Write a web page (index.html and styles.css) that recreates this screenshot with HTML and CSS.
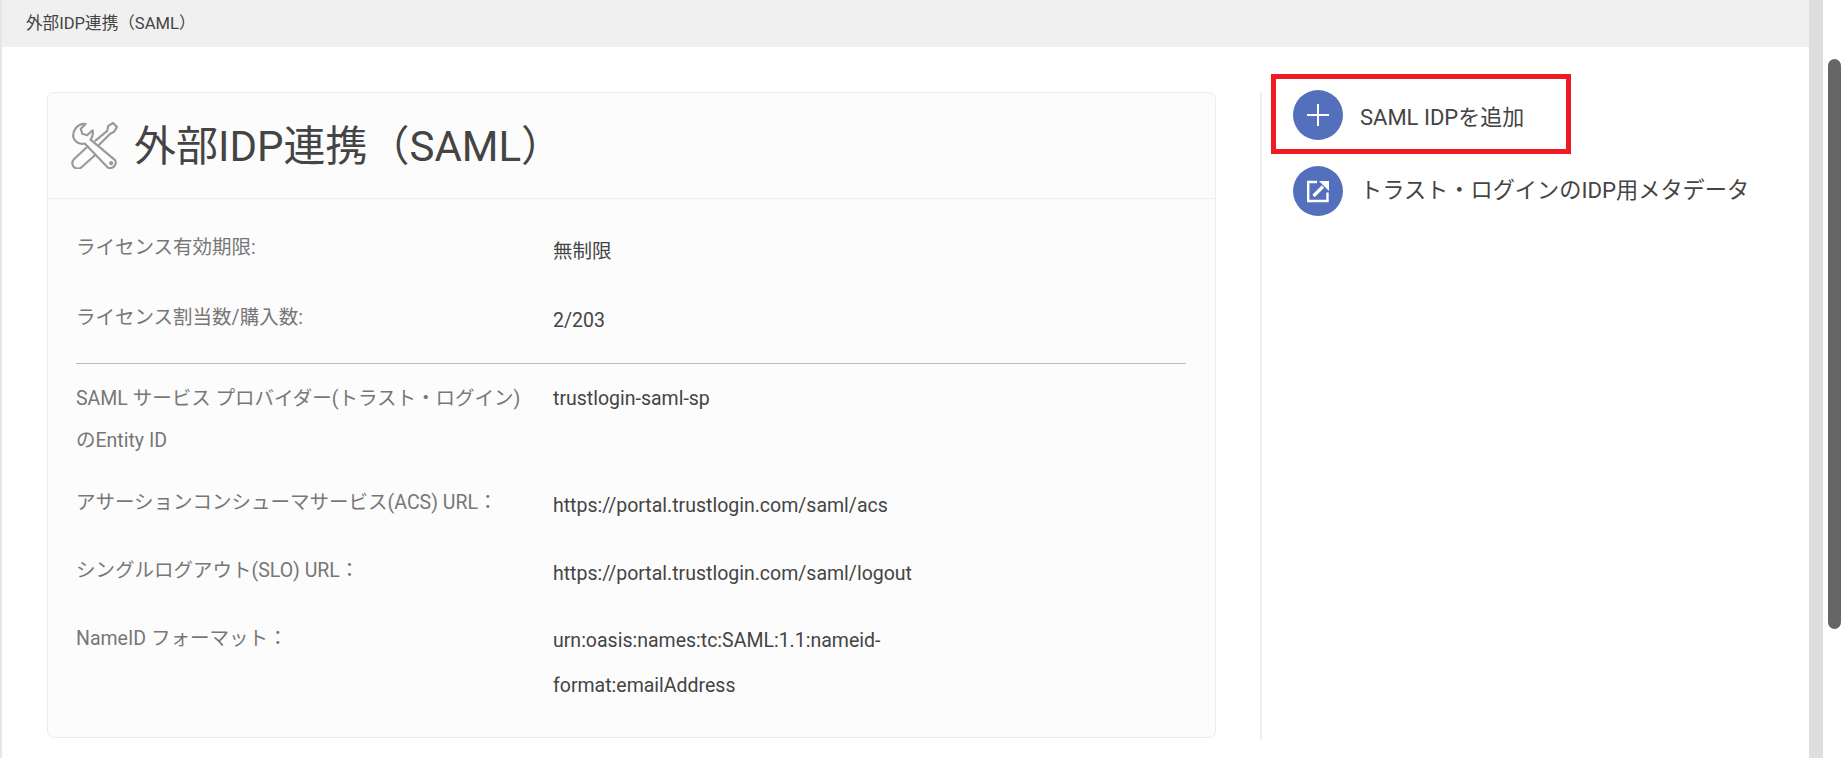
FILE: index.html
```html
<!DOCTYPE html>
<html lang="ja">
<head>
<meta charset="utf-8">
<title>外部IDP連携（SAML）</title>
<link rel="stylesheet" href="styles.css">
</head>
<body>
<div class="app">
  <main class="page">
    <div class="crumb">外部IDP連携（SAML）</div>
    <div class="content">
      <section class="card">
        <header class="card-head">
          <svg class="tools" viewBox="0 0 48 48" fill="none" stroke="#999" stroke-width="2.2" stroke-linejoin="round" stroke-linecap="round">
            <path d="M15 2L10 7L11.5 12L16.5 13.5L22 8.5C23 12 22 15 20 18L45 39A5.5 5.5 0 0 1 37 46L14 22C9 23 4 21 2.5 16C1 10 6 1 15 2Z"/>
            <path d="M25 19L37 9L38 4L43 1L47 5L44 10L40 12L29 23"/>
            <path d="M17 25L3 38A5.5 5.5 0 0 0 11 46L25 33.5"/>
            <circle cx="41" cy="42" r="1"/>
          </svg>
          <h1 class="title">外部IDP連携（SAML）</h1>
        </header>
        <div class="card-body">
          <div class="row r-a"><div class="label">ライセンス有効期限:</div><div class="value">無制限</div></div>
          <div class="row r-b"><div class="label">ライセンス割当数/購入数:</div><div class="value">2/203</div></div>
          <hr class="sep">
          <div class="row r-c"><div class="label">SAML サービス プロバイダー(トラスト・ログイン)のEntity ID</div><div class="value">trustlogin-saml-sp</div></div>
          <div class="row r-d"><div class="label">アサーションコンシューマサービス(ACS) URL：</div><div class="value">https://portal.trustlogin.com/saml/acs</div></div>
          <div class="row r-d"><div class="label">シングルログアウト(SLO) URL：</div><div class="value">https://portal.trustlogin.com/saml/logout</div></div>
          <div class="row r-e"><div class="label">NameID フォーマット：</div><div class="value">urn:oasis:names:tc:SAML:1.1:nameid-format:emailAddress</div></div>
        </div>
      </section>
      <aside class="side">
        <a class="action boxed">
          <span class="disc"><svg viewBox="0 0 24 24" width="24" height="24" fill="none" stroke="#fff" stroke-width="2"><path d="M12 1V23M1 12H23"/></svg></span>
          <span class="action-text">SAML IDPを追加</span>
        </a>
        <a class="action">
          <span class="disc"><svg viewBox="0 0 24 24" width="24" height="24" fill="none" stroke="#fff" stroke-width="2.4"><path d="M11 3H2.2V22H21.5V13.5"/><path d="M7.5 17L17 7.5" stroke-width="3.2"/><path d="M13 2H23V12Z" fill="#fff" stroke="none"/></svg></span>
          <span class="action-text meta">トラスト・ログインのIDP用メタデータ</span>
        </a>
      </aside>
    </div>
  </main>
  <div class="scroll"><div class="thumb"></div></div>
</div>
</body>
</html>
```
FILE: styles.css
```css
* { box-sizing: border-box; }
html, body { margin: 0; height: 100%; overflow: hidden; }
body { font-family: Roboto, "Noto Sans CJK JP", sans-serif; color: #444; background: #fff; }
.app { display: flex; height: 758px; }
.page { width: 1809px; border-left: 2px solid #e6e6e6; }
.crumb { height: 47px; background: #f0f0f0; padding: 14px 0 0 24px; font-size: 16.6px; line-height: 20px; color: #444; }
.content { display: flex; padding: 45px 0 0 45px; align-items: flex-start; }
.card { width: 1169px; height: 646px; background: #fcfcfc; border: 1px solid #ececec; border-radius: 7px; }
.card-head { display: flex; align-items: center; height: 106px; padding: 0 0 0 23px; border-bottom: 1px solid #eee; }
.tools { width: 47px; height: 47px; flex: none; }
.title { margin: 2px 0 0 16px; font-size: 42px; font-weight: 400; color: #444; line-height: 52px; }
.card-body { padding: 0 29px 0 28px; }
.row { display: flex; font-size: 19.5px; line-height: 42px; }
.label { width: 477px; padding-right: 22px; color: #777; }
.value { width: 370px; color: #444; line-height: 45px; }
.r-a { padding-top: 28px; height: 91px; }
.r-a .value { padding-top: 2px; }
.r-b { height: 73px; padding-top: 7px; }
.r-b .value { padding-top: 1px; }
.sep { margin: 0; border: 0; border-top: 1px solid #bbb; }
.r-c { padding-top: 14px; height: 111px; }
.r-c .value { margin-top: -2px; }
.r-d { height: 68px; padding-top: 7px; }
.r-d .value { padding-top: 1px; }
.r-e { padding-top: 7px; }
.side { margin-left: 44px; width: 512px; height: 648px; border-left: 2px solid #eee; display: flex; flex-direction: column; }
.action { display: flex; align-items: center; height: 50px; padding-left: 31px; color: #444; font-size: 22px; }
.boxed { width: 300px; height: 80px; margin: -18px 0 12px 9px; padding: 2px 0 0 17px; border: 5px solid #ed1c24; }
.disc { width: 50px; height: 50px; border-radius: 50%; background: #5470bd; display: flex; align-items: center; justify-content: center; flex: none; }
.action-text { margin-left: 17px; }
.meta { padding-bottom: 6px; font-size: 22.2px; }
.scroll { width: 36px; position: relative; background: #fff; }
.scroll::before { content: ""; position: absolute; left: 0; top: 0; bottom: 0; width: 14px; background: #dedede; }
.thumb { position: absolute; left: 19px; top: 59px; width: 13px; height: 570px; border-radius: 7px; background: #666; }
```
